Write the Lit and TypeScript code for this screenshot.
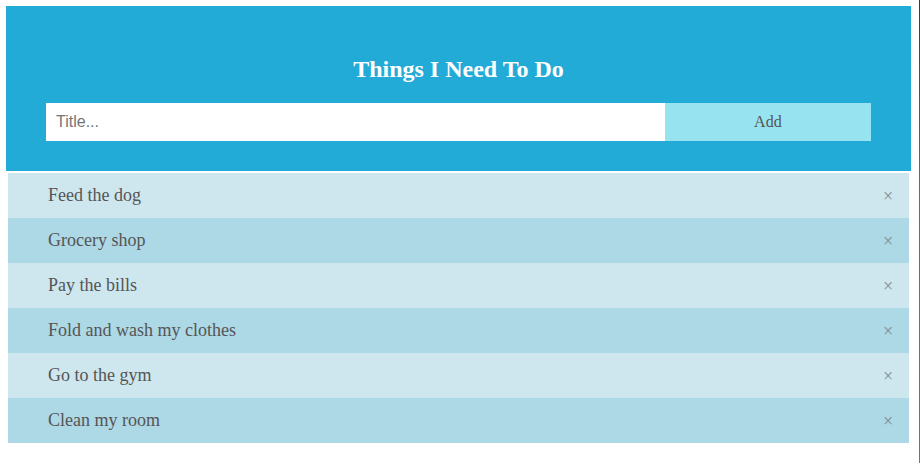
import { LitElement, html, css } from "lit";
import { customElement, state } from "lit/decorators.js";
import { repeat } from "lit/directives/repeat.js";

interface Task {
  id: number;
  title: string;
}

@customElement("app-root")
export class AppRoot extends LitElement {
  static styles = css`
    :host {
      display: flex;
      box-sizing: border-box;
      min-height: 100vh;
      background: #fff;
      font-family: "Liberation Serif", "Times New Roman", serif;
      color: #555;
    }
    * {
      box-sizing: border-box;
    }
    .page {
      flex: 1;
      min-width: 0;
      padding: 6px 8px 20px 6px;
    }
    .edge {
      width: 1px;
      background: linear-gradient(#3c3838, #7d625c 40%, #8a6a62);
    }
    .header {
      padding: 50px 40px 30px;
      background: #23abd7;
      color: #fff;
    }
    .title {
      margin: 0 0 20px;
      font-size: 24px;
      line-height: 27px;
      font-weight: bold;
      text-align: center;
    }
    .form {
      display: grid;
      grid-template-columns: 3fr 1fr;
      height: 38px;
    }
    .field {
      min-width: 0;
      border: 0;
      border-radius: 0;
      padding: 0 10px;
      background: #fff;
      color: #555;
      font: 16px "Liberation Sans", Arial, sans-serif;
      outline: none;
    }
    .field::placeholder {
      color: #757575;
      opacity: 1;
    }
    .add {
      border: 0;
      padding: 0;
      background: #97e4f0;
      color: #555;
      font: 16px "Liberation Serif", "Times New Roman", serif;
      cursor: pointer;
    }
    .list {
      margin: 2px;
      padding: 0;
      list-style: none;
    }
    .item {
      display: flex;
      align-items: center;
      justify-content: space-between;
      height: 45px;
      padding-left: 40px;
      background: #cee7ef;
      font-size: 18px;
      line-height: 21px;
    }
    .item:nth-child(even) {
      background: #add8e6;
    }
    .close {
      align-self: stretch;
      width: 42px;
      border: 0;
      padding: 2px 0 0;
      background: none;
      color: #7b8b93;
      font: 18px/21px "Liberation Serif", "Times New Roman", serif;
      cursor: pointer;
    }
  `;

  @state() private tasks: Task[] = [
    "Feed the dog",
    "Grocery shop",
    "Pay the bills",
    "Fold and wash my clothes",
    "Go to the gym",
    "Clean my room",
  ].map((title, id) => ({ id, title }));

  private nextId = 6;

  private add(event: Event) {
    event.preventDefault();
    const field = this.renderRoot.querySelector<HTMLInputElement>(".field")!;
    const title = field.value.trim();
    if (!title) return;
    this.tasks = [...this.tasks, { id: this.nextId++, title }];
    field.value = "";
  }

  private remove(id: number) {
    this.tasks = this.tasks.filter((task) => task.id !== id);
  }

  render() {
    return html`
      <main class="page">
        <header class="header">
          <h2 class="title">Things I Need To Do</h2>
          <form class="form" @submit=${this.add}>
            <input class="field" type="text" placeholder="Title..." aria-label="Title" />
            <button class="add" type="submit">Add</button>
          </form>
        </header>
        <ul class="list">
          ${repeat(
            this.tasks,
            (task) => task.id,
            (task) => html`
              <li class="item">
                <span>${task.title}</span>
                <button
                  class="close"
                  type="button"
                  aria-label="Remove ${task.title}"
                  @click=${() => this.remove(task.id)}
                >×</button>
              </li>
            `,
          )}
        </ul>
      </main>
      <div class="edge"></div>
    `;
  }
}
